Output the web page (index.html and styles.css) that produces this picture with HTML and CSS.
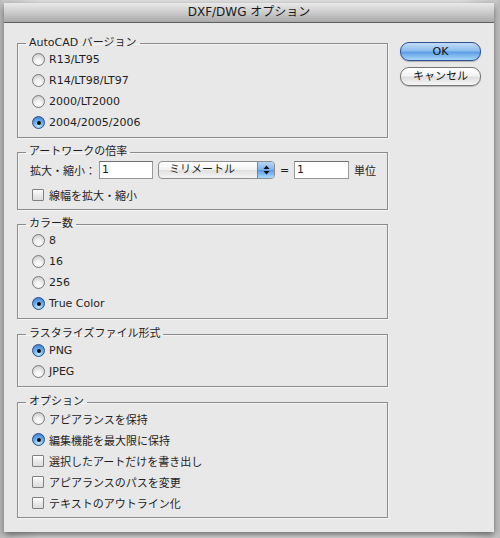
FILE: index.html
```html
<!DOCTYPE html>
<html lang="ja">
<head>
<meta charset="utf-8">
<title>DXF/DWG オプション</title>
<link rel="stylesheet" href="styles.css">
</head>
<body>
<div class="window">
  <div class="titlebar">DXF/DWG オプション</div>
  <div class="content">
    <div class="groups">
      <fieldset class="group">
        <legend>AutoCAD バージョン</legend>
        <div class="row"><span class="radio"></span>R13/LT95</div>
        <div class="row"><span class="radio"></span>R14/LT98/LT97</div>
        <div class="row"><span class="radio"></span>2000/LT2000</div>
        <div class="row"><span class="radio on"></span>2004/2005/2006</div>
      </fieldset>
      <fieldset class="group">
        <legend>アートワークの倍率</legend>
        <div class="row scale">
          <span class="lbl">拡大・縮小：</span>
          <span class="field f1">1</span>
          <span class="popup"><span class="popup-text">ミリメートル</span><span class="popup-arrows"><svg width="7" height="10" viewBox="0 0 7 10"><path d="M3.5 0.5 L6.5 4 L0.5 4 Z M3.5 9.5 L6.5 6 L0.5 6 Z" fill="#111"/></svg></span></span>
          <span class="eq">=</span>
          <span class="field f2">1</span>
          <span class="unit">単位</span>
        </div>
        <div class="row chk-row"><span class="check"></span>線幅を拡大・縮小</div>
      </fieldset>
      <fieldset class="group">
        <legend>カラー数</legend>
        <div class="row"><span class="radio"></span>8</div>
        <div class="row"><span class="radio"></span>16</div>
        <div class="row"><span class="radio"></span>256</div>
        <div class="row"><span class="radio on"></span>True Color</div>
      </fieldset>
      <fieldset class="group shifted">
        <legend>ラスタライズファイル形式</legend>
        <div class="row"><span class="radio on"></span>PNG</div>
        <div class="row"><span class="radio"></span>JPEG</div>
      </fieldset>
      <fieldset class="group shifted">
        <legend>オプション</legend>
        <div class="row"><span class="radio"></span>アピアランスを保持</div>
        <div class="row"><span class="radio on"></span>編集機能を最大限に保持</div>
        <div class="row"><span class="check"></span>選択したアートだけを書き出し</div>
        <div class="row"><span class="check"></span>アピアランスのパスを変更</div>
        <div class="row"><span class="check"></span>テキストのアウトライン化</div>
      </fieldset>
    </div>
    <div class="buttons">
      <div class="btn ok">OK</div>
      <div class="btn cancel">キャンセル</div>
    </div>
  </div>
</div>
</body>
</html>
```

FILE: styles.css
```css
html, body {
  margin: 0;
  padding: 0;
}
body {
  width: 500px;
  height: 538px;
  overflow: hidden;
  background: linear-gradient(to right, #bdbdbd 0, #c9c9c9 4px, #e2e2e2 40px, #e2e2e2 460px, #c9c9c9 496px, #bdbdbd 500px);
  font-family: "DejaVu Sans", "Noto Sans CJK JP", sans-serif;
  color: #1e1e1e;
}
.window {
  width: 490px;
  height: 529px;
  margin: 3px 0 0 4px;
  background: #e8e8e8;
  box-shadow: 0 3px 7px rgba(0, 0, 0, 0.55);
  display: flex;
  flex-direction: column;
}
.titlebar {
  height: 19px;
  line-height: 19px;
  border-bottom: 1px solid #5e5e5e;
  background: linear-gradient(#e9e9e9, #cfcfcf 45%, #a9a9a9);
  text-align: center;
  font-size: 12px;
  color: #1a1a1a;
  border-radius: 4px 4px 0 0;
}
.content {
  display: flex;
  padding: 14px 13px 0 13px;
  gap: 12px;
}
.groups {
  width: 371px;
  display: flex;
  flex-direction: column;
  gap: 8px;
}
.group {
  margin: 0;
  padding: 0 0 4px 14px;
  border: 1px solid #8b8b8b;
  box-shadow: 1px 1px 0 #f6f6f6, inset 1px 1px 0 #f4f4f4;
  min-inline-size: 0;
}
.shifted {
  margin-top: 1px;
}
legend {
  font-size: 11px;
  line-height: 12px;
  padding: 0 3px;
  margin-left: -6px;
}
.row {
  height: 21px;
  display: flex;
  align-items: center;
  font-size: 11px;
}
.radio {
  width: 11px;
  height: 11px;
  border-radius: 50%;
  border: 1px solid #7a7a7a;
  background: radial-gradient(circle at 50% 75%, #ffffff 0, #f2f2f2 35%, #cfcfcf 80%);
  margin-right: 4px;
  flex: none;
  position: relative;
}
.radio.on {
  border-color: #2b4f8c;
  background: radial-gradient(circle at 50% 80%, #c6ecff 0, #6fb0f0 45%, #2f6fcc 100%);
}
.radio.on::after {
  content: "";
  position: absolute;
  left: 3.5px;
  top: 3.5px;
  width: 4px;
  height: 4px;
  border-radius: 50%;
  background: #0d0d0d;
}
.check {
  width: 10px;
  height: 10px;
  border: 1px solid #808080;
  border-radius: 1px;
  background: linear-gradient(#fefefe, #eaeaea 50%, #dcdcdc);
  margin-right: 5px;
  flex: none;
}
.scale {
  height: 24px;
  margin-left: -2px;
}
.chk-row {
  margin-top: 2px;
}
.lbl {
  width: 69px;
}
.field {
  height: 16px;
  line-height: 16px;
  background: #fff;
  border: 1px solid #999;
  border-top-color: #6f6f6f;
  padding-left: 2px;
  box-sizing: content-box;
}
.f1 {
  width: 50px;
}
.f2 {
  width: 51px;
}
.popup {
  margin-left: 5px;
  width: 115px;
  height: 16px;
  border: 1px solid #8d8d8d;
  border-radius: 4px;
  background: linear-gradient(#ffffff, #f1f1f1 50%, #e0e0e0 51%, #f4f4f4);
  display: flex;
  overflow: hidden;
}
.popup-text {
  flex: 1;
  padding-left: 10px;
  line-height: 16px;
}
.popup-arrows {
  width: 16px;
  border-left: 1px solid #5b85c0;
  background: linear-gradient(#b6d6f6, #7fb3ea 50%, #5a9be2 51%, #a8dcff);
  display: flex;
  align-items: center;
  justify-content: center;
}
.eq {
  width: 19px;
  text-align: center;
}
.unit {
  margin-left: 5px;
}
.buttons {
  width: 81px;
  padding-top: 5px;
  display: flex;
  flex-direction: column;
  gap: 6px;
}
.btn {
  height: 17px;
  line-height: 17px;
  border-radius: 9px;
  text-align: center;
  font-size: 11px;
  color: #111;
}
.ok {
  border: 1px solid #2d4f93;
  background: linear-gradient(#c3dcf6, #8dbdee 45%, #5d9fe5 55%, #a9d9fb);
  box-shadow: 0 1px 1px rgba(0, 0, 0, 0.25);
}
.cancel {
  border: 1px solid #757575;
  background: linear-gradient(#ffffff, #f3f3f3 45%, #dedede 55%, #f7f7f7);
  box-shadow: 0 1px 1px rgba(0, 0, 0, 0.2);
}
```
